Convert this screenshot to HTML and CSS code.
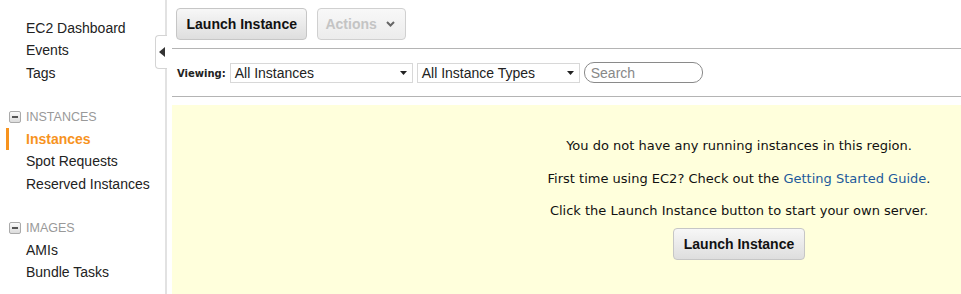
FILE: index.html
```html
<!DOCTYPE html>
<html lang="en">
<head>
  <meta charset="UTF-8" />
  <title>EC2 Instances</title>
  <link rel="stylesheet" href="styles.css">
</head>
<body>
  <div class="layout">
    <div class="sidebar">
      <ul class="nav-group">
        <li>EC2 Dashboard</li>
        <li>Events</li>
        <li>Tags</li>
      </ul>
      <ul class="nav-group">
        <li class="nav-header"><span class="collapse-box"></span>INSTANCES</li>
        <li class="active">Instances</li>
        <li>Spot Requests</li>
        <li>Reserved Instances</li>
      </ul>
      <ul class="nav-group">
        <li class="nav-header"><span class="collapse-box"></span>IMAGES</li>
        <li>AMIs</li>
        <li>Bundle Tasks</li>
      </ul>
      <div class="sidebar-toggle">
        <svg width="6" height="10" viewBox="0 0 6 10"><path d="M6 0 L0 5 L6 10 Z" fill="#333"/></svg>
      </div>
    </div>

    <div class="main">
      <div class="toolbar">
        <button class="btn">Launch Instance</button>
        <button class="btn disabled">Actions
          <svg width="9" height="6" viewBox="0 0 9 6"><path d="M1 1 L4.5 4.5 L8 1" fill="none" stroke="#666" stroke-width="2"/></svg>
        </button>
      </div>

      <div class="filter-row">
        <span class="viewing">Viewing:</span>
        <span class="select wide">All Instances
          <svg width="7" height="4" viewBox="0 0 7 4"><path d="M0 0 H7 L3.5 4 Z" fill="#222"/></svg>
        </span>
        <span class="select">All Instance Types
          <svg width="7" height="4" viewBox="0 0 7 4"><path d="M0 0 H7 L3.5 4 Z" fill="#222"/></svg>
        </span>
        <span class="search">Search</span>
      </div>

      <div class="empty-box">
        <p>You do not have any running instances in this region.</p>
        <p>First time using EC2? Check out the <a href="#">Getting Started Guide</a>.</p>
        <p>Click the Launch Instance button to start your own server.</p>
        <button class="btn">Launch Instance</button>
      </div>
    </div>
  </div>
</body>
</html>
```

FILE: styles.css
```css
body {
  margin: 0;
  overflow: hidden;
  background: #fff;
  font-family: 'Liberation Sans', Arial, sans-serif;
  font-size: 14px;
  color: #222;
}
.layout {
  display: flex;
}
.sidebar {
  position: relative;
  width: 167px;
  flex-shrink: 0;
  border-right: 2px solid #e2e2e2;
  padding-top: 17px;
  height: 294px;
  box-sizing: border-box;
}
.nav-group {
  list-style: none;
  margin: 0 0 22px 0;
  padding: 0;
}
.nav-group li {
  line-height: 22.25px;
  padding-left: 26px;
}
.nav-header {
  position: relative;
  color: #999;
  font-size: 12.5px;
}
.collapse-box {
  position: absolute;
  left: 9px;
  top: 5px;
  width: 10px;
  height: 10px;
  border: 1px solid #aaa;
  border-radius: 2px;
  background: linear-gradient(#fafafa, #dcdcdc);
}
.collapse-box::after {
  content: "";
  position: absolute;
  left: 2px;
  top: 4px;
  width: 6px;
  height: 2px;
  background: #555;
}
.nav-group li.active {
  color: #f7931e;
  font-weight: bold;
  margin-left: 6px;
  padding-left: 17px;
  border-left: 3px solid #f7931e;
}
.sidebar-toggle {
  position: absolute;
  top: 35px;
  right: -2px;
  width: 11px;
  height: 32px;
  background: #fff;
  border: 1px solid #d4d4d4;
  border-right: none;
  border-radius: 4px 0 0 4px;
  display: flex;
  align-items: center;
  justify-content: center;
}
.main {
  flex: 1;
  min-width: 0;
  padding: 8px 0 0 5px;
}
.toolbar {
  display: flex;
  gap: 10px;
  padding: 0 0 8px 4px;
  border-bottom: 1px solid #b4b4b4;
}
.btn {
  height: 32px;
  padding: 0 9.5px;
  border: 1px solid #c6c6c6;
  border-radius: 4px;
  background: linear-gradient(#f7f7f7, #dedede);
  font-family: 'Liberation Sans', Arial, sans-serif;
  font-size: 14px;
  font-weight: bold;
  color: #111;
  display: inline-flex;
  align-items: center;
  gap: 9px;
}
.btn.disabled {
  color: #c4c4c4;
  background: linear-gradient(#f8f8f8, #ececec);
  border-color: #d0d0d0;
  padding: 0 10px 0 7px;
}
.filter-row {
  display: flex;
  align-items: center;
  height: 47px;
  padding-left: 5px;
  border-bottom: 1px solid #b4b4b4;
}
.viewing {
  font-family: 'DejaVu Sans', Verdana, sans-serif;
  font-size: 10px;
  font-weight: bold;
  margin-right: 4px;
  margin-top: 1px;
}
.select {
  height: 20px;
  box-sizing: border-box;
  border: 1px solid #d8d8d8;
  padding: 0 5px 0 4px;
  display: flex;
  align-items: center;
  justify-content: space-between;
  margin-right: 4px;
  background: #fff;
  width: 163px;
}
.select.wide {
  width: 183px;
}
.search {
  width: 119px;
  height: 21px;
  box-sizing: border-box;
  border: 1px solid #8a8a8a;
  border-radius: 10px;
  padding-left: 6px;
  color: #888;
  display: flex;
  align-items: center;
}
.empty-box {
  margin-top: 8px;
  background: #ffffdc;
  height: 200px;
  padding: 32px 0 0 345px;
  box-sizing: border-box;
  text-align: center;
  font-family: 'DejaVu Sans', Verdana, sans-serif;
  font-size: 13px;
  color: #111;
}
.empty-box p {
  margin: 0 0 15px 0;
  line-height: 17.5px;
  white-space: nowrap;
}
.empty-box a {
  color: #1d5a9b;
  text-decoration: none;
}
.empty-box .btn {
  margin-top: -7px;
}
```
